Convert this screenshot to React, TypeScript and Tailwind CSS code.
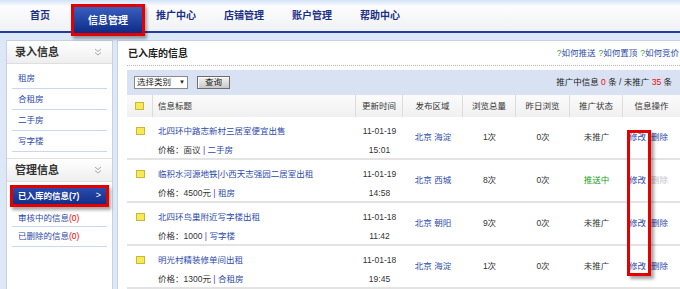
import React from "react";

const FONT = '"Liberation Sans", "Noto Sans CJK SC", sans-serif';

const navItems = ["首页", "信息管理", "推广中心", "店铺管理", "账户管理", "帮助中心"];

type Row = {
  title: string;
  price: string;
  cat: string;
  date: string;
  time: string;
  area: string;
  total: string;
  yday: string;
  status: string;
  pushing?: boolean;
  delDisabled?: boolean;
};

const rows: Row[] = [
  { title: "北四环中路志新村三居室便宜出售", price: "面议", cat: "二手房", date: "11-01-19", time: "15:01", area: "北京 海淀", total: "1次", yday: "0次", status: "未推广" },
  { title: "临积水河源地铁|小西天志强园二居室出租", price: "4500元", cat: "租房", date: "11-01-19", time: "14:58", area: "北京 西城", total: "8次", yday: "0次", status: "推送中", pushing: true, delDisabled: true },
  { title: "北四环鸟巢附近写字楼出租", price: "1000", cat: "写字楼", date: "11-01-18", time: "11:42", area: "北京 朝阳", total: "9次", yday: "0次", status: "未推广" },
  { title: "明光村精装修单间出租", price: "1300元", cat: "合租房", date: "11-01-18", time: "19:45", area: "北京 海淀", total: "1次", yday: "0次", status: "未推广" },
];

function Chevrons() {
  return (
    <svg width="8" height="8" viewBox="0 0 8 8" className="text-[#a8a8a8]">
      <path d="M1 1 L4 3.5 L7 1 M1 4.5 L4 7 L7 4.5" fill="none" stroke="currentColor" strokeWidth="1" />
    </svg>
  );
}

function Box() {
  return <div className="w-[9px] h-[8px] bg-[#f7ea55] border border-[#c9b63c]" />;
}

function SideHeader({ label }: { label: string }) {
  return (
    <div className="h-[23px] flex items-center justify-between pl-[8px] pr-[10px] bg-gradient-to-b from-[#ffffff] to-[#eeeeee] border-b border-[#dedede]">
      <span className="text-[11px] font-bold text-[#333]">{label}</span>
      <Chevrons />
    </div>
  );
}

export default function App() {
  return (
    <div className="w-[680px] h-[289px] overflow-hidden bg-[#dce7f7] flex flex-col" style={{ fontFamily: FONT }}>
      {/* top nav */}
      <div className="h-[33px] shrink-0 bg-gradient-to-b from-[#d3e2f7] via-[#fdfdfe] via-20% to-[#eff1f4] border-b-2 border-[#213e9c] flex pl-[6px]">
        {navItems.map((n) =>
          n === "信息管理" ? (
            <div key={n} className="w-[68px] relative flex">
              <div className="mt-[7px] mb-[-2px] w-full bg-gradient-to-b from-[#3a5fbf] to-[#0e2a86] flex items-center justify-center text-white text-[10px] font-bold">
                {n}
              </div>
              <div className="absolute left-[-3px] right-[-3px] top-[4px] bottom-[-5px] border-[3px] border-[#e50000] shadow-[2px_3px_3px_rgba(0,0,0,0.35)]" />
            </div>
          ) : (
            <div key={n} className="w-[68px] flex items-center justify-center text-[10px] font-bold text-[#1b2f85]">
              {n}
            </div>
          )
        )}
      </div>

      <div className="flex flex-1 min-h-0 pt-[7px]">
        {/* sidebar */}
        <div className="ml-[6px] w-[107px] shrink-0 bg-white border border-[#c6d2e4] border-b-0 flex flex-col">
          <SideHeader label="录入信息" />
          <div className="px-[5px] pt-[4px]">
            {["租房", "合租房", "二手房", "写字楼"].map((t) => (
              <div key={t} className="h-[21px] border-b border-[#c9d8ef] flex items-center pl-[6px] text-[8.5px] text-[#2d4aa8]">
                {t}
              </div>
            ))}
          </div>
          <div className="mt-[6px] border-t border-[#dedede]">
            <SideHeader label="管理信息" />
          </div>
          <div className="px-[5px] pt-[6px]">
            <div className="relative h-[16px] mx-[1px] bg-gradient-to-b from-[#2a4cae] to-[#112e8a] flex items-center justify-between pl-[5px] pr-[5px] text-white text-[8.5px] font-bold">
              <span>已入库的信息(7)</span>
              <span className="text-[9px] font-normal">&gt;</span>
              <div className="absolute left-[-3px] right-[-3px] top-[-3px] bottom-[-3px] border-[3px] border-[#e50000] shadow-[2px_3px_3px_rgba(0,0,0,0.35)]" />
            </div>
            <div className="mt-[3px] h-[20px] pt-[3px] border-b border-[#c9d8ef] flex items-center pl-[6px] text-[8.5px] text-[#2d4aa8]">
              审核中的信息<span className="text-[#ff0000]">(0)</span>
            </div>
            <div className="h-[20px] border-b border-[#c9d8ef] flex items-center pl-[6px] text-[8.5px] text-[#2d4aa8]">
              已删除的信息<span className="text-[#ff0000]">(0)</span>
            </div>
          </div>
        </div>

        {/* content */}
        <div className="ml-[4px] flex-1 min-w-0 bg-white border-l border-t border-[#c6d2e4] pl-[9px] flex flex-col">
          <div className="h-[25px] shrink-0 flex items-center justify-between border-b border-dotted border-[#b8b8b8] pl-[1px]">
            <span className="text-[10px] font-bold text-[#222]">已入库的信息</span>
            <div className="flex gap-[3px] text-[8.5px] text-[#2d4aa8] whitespace-nowrap pr-[1px]">
              <span><span className="text-[#3a9a3a]">?</span>如何推送</span>
              <span><span className="text-[#3a9a3a]">?</span>如何置顶</span>
              <span><span className="text-[#3a9a3a]">?</span>如何竞价</span>
            </div>
          </div>

          <div className="mt-[4px] h-[25px] shrink-0 bg-[#d8e2f2] flex items-center justify-between pl-[7px] pr-[8px]">
            <div className="flex items-center gap-[9px]">
              <div className="w-[54px] h-[13px] bg-white border border-[#8a8a8a] flex items-center justify-between px-[2px] text-[8.5px] text-[#222]">
                <span>选择类别</span>
                <span className="text-[6px]">▼</span>
              </div>
              <div className="w-[33px] h-[13px] border border-[#6d6d6d] bg-gradient-to-b from-[#f4f4f4] to-[#c9c9c9] flex items-center justify-center text-[8.5px] text-[#222] shadow-[inset_1px_1px_0_#fff]">
                查询
              </div>
            </div>
            <div className="text-[8.5px] text-[#222] whitespace-nowrap">
              推广中信息 <span className="text-[#ff0000]">0</span> 条 / 未推广 <span className="text-[#ff0000]">35</span> 条
            </div>
          </div>

          <div className="relative flex flex-col text-[8.5px]">
            {/* header */}
            <div className="h-[22px] flex bg-gradient-to-b from-[#fbfbfb] to-[#f0f0f0] text-[#333]">
              <div className="w-[26px] border-r border-[#dcdcdc] flex items-center justify-center"><Box /></div>
              <div className="w-[203px] border-r border-[#dcdcdc] flex items-center pl-[5px]">信息标题</div>
              <div className="w-[47px] border-r border-[#dcdcdc] flex items-center justify-center">更新时间</div>
              <div className="w-[60px] border-r border-[#dcdcdc] flex items-center justify-center">发布区域</div>
              <div className="w-[53px] border-r border-[#dcdcdc] flex items-center justify-center">浏览总量</div>
              <div className="w-[54px] border-r border-[#dcdcdc] flex items-center justify-center">昨日浏览</div>
              <div className="w-[53px] border-r border-[#dcdcdc] flex items-center justify-center">推广状态</div>
              <div className="w-[57px] flex items-center justify-center">信息操作</div>
            </div>
            {rows.map((r, i) => (
              <div key={i} className="h-[43px] flex border-b-2 border-[#e3e3e3] text-[#333]">
                <div className="w-[26px] pt-[10px] flex justify-center"><Box /></div>
                <div className="w-[203px] pl-[5px] pt-[6px] flex flex-col gap-[3px] leading-[16px] whitespace-nowrap">
                  <span className="text-[#2d4aa8]">{r.title}</span>
                  <span>
                    价格：{r.price} <span className="text-[#6a2cc0]">|</span> <span className="text-[#2d4aa8]">{r.cat}</span>
                  </span>
                </div>
                <div className="w-[47px] pt-[6px] flex flex-col items-center gap-[3px] leading-[16px]">
                  <span>{r.date}</span>
                  <span>{r.time}</span>
                </div>
                <div className="w-[60px] flex items-center justify-center text-[#2d4aa8]">{r.area}</div>
                <div className="w-[53px] flex items-center justify-center">{r.total}</div>
                <div className="w-[54px] flex items-center justify-center">{r.yday}</div>
                <div className={"w-[53px] flex items-center justify-center " + (r.pushing ? "text-[#22a022]" : "")}>{r.status}</div>
                <div className="w-[57px] flex items-center pl-[6px] gap-[5px] whitespace-nowrap">
                  <span className="text-[#2d4aa8]">修改</span>
                  <span className={r.delDisabled ? "text-[#c4c4c4]" : "text-[#2d4aa8]"}>删除</span>
                </div>
              </div>
            ))}
            <div className="absolute left-[500px] top-[35px] w-[24px] h-[146px] border-[3px] border-[#e50000] shadow-[3px_3px_3px_rgba(0,0,0,0.35)]" />
          </div>
        </div>
      </div>
    </div>
  );
}
